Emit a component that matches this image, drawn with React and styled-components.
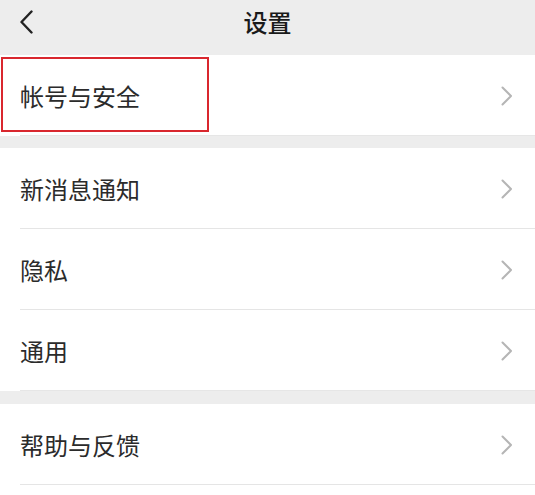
import React from "react";
import styled, { createGlobalStyle } from "styled-components";

const GlobalStyle = createGlobalStyle`
  html, body {
    margin: 0;
    padding: 0;
    background: #ffffff;
  }
  body {
    font-family: "Noto Sans CJK SC", "Noto Sans", sans-serif;
  }
`;

const Page = styled.div`
  width: 535px;
  height: 495px;
  background: #ffffff;
  overflow: hidden;
`;

const Header = styled.div`
  height: 55px;
  background: #ededed;
  display: grid;
  grid-template-columns: 60px 1fr 60px;
  align-items: start;
  padding-top: 10px;
  box-sizing: border-box;
`;

const BackButton = styled.div`
  padding-left: 19px;
  height: 24px;
  display: flex;
  align-items: center;
`;

const Title = styled.div`
  text-align: center;
  font-size: 24px;
  line-height: 24px;
  font-weight: 500;
  color: #1a1a1a;
`;

const Gap = styled.div`
  height: ${(p) => p.size}px;
  background: #ededed;
`;

const Group = styled.div`
  background: #ffffff;
`;

const Row = styled.div`
  position: relative;
  height: 81px;
  display: flex;
  align-items: center;
  justify-content: space-between;
  padding: 0 22px 0 20px;
  box-sizing: border-box;

  &::after {
    content: "";
    position: absolute;
    left: 20px;
    right: 0;
    bottom: 0;
    height: 1px;
    background: ${(p) => (p.last ? "#e6e6e6" : "#e5e5e5")};
  }
`;

const Label = styled.span`
  font-size: 24px;
  color: #2b2b2b;
  letter-spacing: 0;
`;

const Highlight = styled.div`
  position: absolute;
  left: 1px;
  top: 2px;
  width: 208px;
  height: 75px;
  border: 2px solid #d9272e;
  box-sizing: border-box;
  pointer-events: none;
`;

const BackIcon = () => (
  <svg width="14" height="24" viewBox="0 0 14 24">
    <path d="M12.5 1.5 L2.5 12 L12.5 22.5" fill="none" stroke="#222" strokeWidth="2.4" strokeLinecap="round" strokeLinejoin="round" />
  </svg>
);

const Chevron = () => (
  <svg width="12" height="20" viewBox="0 0 12 20">
    <path d="M1.5 1.5 L10 10 L1.5 18.5" fill="none" stroke="#b5b5b5" strokeWidth="2" strokeLinecap="round" strokeLinejoin="round" />
  </svg>
);

const Item = ({ label, highlight, last }) => (
  <Row last={last}>
    {highlight && <Highlight />}
    <Label>{label}</Label>
    <Chevron />
  </Row>
);

export default function App() {
  return (
    <Page>
      <GlobalStyle />
      <Header>
        <BackButton>
          <BackIcon />
        </BackButton>
        <Title>设置</Title>
        <div />
      </Header>
      <Group>
        <Item label="帐号与安全" highlight last />
      </Group>
      <Gap size={12} />
      <Group>
        <Item label="新消息通知" />
        <Item label="隐私" />
        <Item label="通用" last />
      </Group>
      <Gap size={13} />
      <Group>
        <Item label="帮助与反馈" />
      </Group>
    </Page>
  );
}
